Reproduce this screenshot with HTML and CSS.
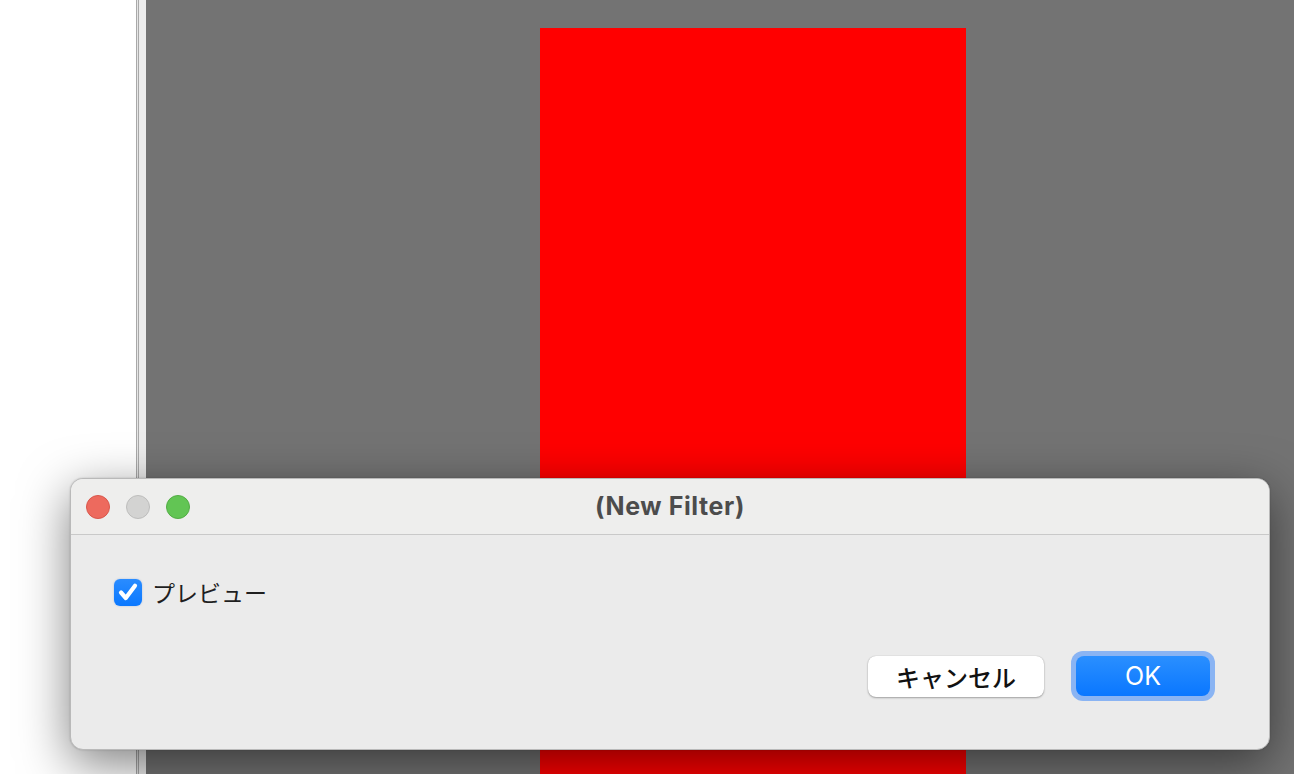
FILE: index.html
```html
<!DOCTYPE html>
<html>
<head>
<meta charset="utf-8">
<link rel="stylesheet" href="styles.css">
</head>
<body>
<div class="app">
  <div class="sidebar"></div>
  <div class="divider"><span class="line"></span><span class="gap"></span><span class="line"></span><span class="pad"></span></div>
  <div class="canvas">
    <div class="artboard"></div>
  </div>
</div>
<div class="dialog">
  <div class="titlebar">
    <div class="lights">
      <span class="light red"></span>
      <span class="light gray"></span>
      <span class="light green"></span>
    </div>
    <div class="title">(New Filter)</div>
  </div>
  <div class="body">
    <label class="check">
      <span class="box"><svg viewBox="0 0 28 28" width="28" height="28"><path d="M7 14.5 L11.8 20 L21 7.8" fill="none" stroke="#fff" stroke-width="4.2" stroke-linecap="round" stroke-linejoin="round"/></svg></span>
      <span class="check-label">プレビュー</span>
    </label>
    <div class="buttons">
      <button class="btn cancel">キャンセル</button>
      <span class="ring"><button class="btn ok">OK</button></span>
    </div>
  </div>
</div>
</body>
</html>
```
FILE: styles.css
```css
html, body {
  margin: 0;
  padding: 0;
  width: 1294px;
  height: 774px;
  overflow: hidden;
}
body {
  position: relative;
  font-family: "Inter", "Liberation Sans", "Noto Sans CJK JP", sans-serif;
}
.app {
  display: flex;
  height: 774px;
}
.sidebar {
  width: 136px;
  background: #ffffff;
}
.divider {
  display: flex;
  width: 10px;
}
.divider .line {
  width: 1px;
  background: #a9a9a9;
}
.divider .gap {
  width: 1px;
  background: #e6e6e6;
}
.divider .pad {
  width: 7px;
  background: #ececec;
}
.canvas {
  flex: 1;
  background: #737373;
  padding-top: 28px;
  padding-left: 394px;
}
.artboard {
  width: 426px;
  height: 760px;
  background: #ff0000;
}
.dialog {
  position: absolute;
  left: 70px;
  top: 478px;
  width: 1200px;
  height: 272px;
  box-sizing: border-box;
  border-radius: 13px;
  background: #ebebeb;
  border: 1px solid #b9b9b9;
  box-shadow: 0 14px 50px rgba(0, 0, 0, 0.5), 0 0 2px rgba(0, 0, 0, 0.2);
  overflow: hidden;
}
.titlebar {
  height: 56px;
  box-sizing: border-box;
  background: #eeeeed;
  border-bottom: 1px solid #c9c9c9;
  display: flex;
  align-items: center;
  position: relative;
}
.lights {
  display: flex;
  gap: 16px;
  padding-left: 15px;
}
.light {
  width: 24px;
  height: 24px;
  border-radius: 50%;
  box-sizing: border-box;
}
.light.red {
  background: #ed6a5e;
  border: 1px solid #d8574c;
}
.light.gray {
  background: #d3d3d2;
  border: 1px solid #bdbdbc;
}
.light.green {
  background: #62c554;
  border: 1px solid #53ac45;
}
.title {
  position: absolute;
  left: 0;
  right: 0;
  top: 0;
  bottom: 0;
  display: flex;
  align-items: center;
  justify-content: center;
  font-size: 25px;
  letter-spacing: 0.6px;
  font-weight: 700;
  color: #4c4c4c;
  padding-bottom: 1px;
}
.body {
  padding: 40px 0 0 43px;
}
.check {
  display: flex;
  align-items: center;
  gap: 10px;
}
.box {
  width: 28px;
  height: 27px;
  border-radius: 6px;
  background: linear-gradient(#2a8cff, #0a78ff);
  display: flex;
  align-items: center;
  justify-content: center;
  box-shadow: 0 0 2px rgba(0, 80, 200, 0.3);
}
.box svg {
  display: block;
}
.check-label {
  font-family: "Noto Sans CJK JP", sans-serif;
  font-size: 23px;
  color: #1f1f1f;
}
.buttons {
  display: flex;
  justify-content: flex-end;
  align-items: center;
  gap: 27px;
  margin-top: 42px;
  padding-right: 54px;
}
.btn {
  border: none;
  margin: 0;
  padding: 0;
  font-family: "Noto Sans CJK JP", "Inter", sans-serif;
  font-size: 24px;
  border-radius: 8px;
  display: flex;
  align-items: center;
  justify-content: center;
}
.cancel {
  width: 176px;
  height: 41px;
  background: #ffffff;
  color: #111111;
  font-weight: 500;
  box-shadow: 0 1px 2px rgba(0, 0, 0, 0.3), 0 0 1px rgba(0, 0, 0, 0.25);
}
.ring {
  display: flex;
  padding: 5px;
  border-radius: 12px;
  background: #8ab4f3;
}
.ok {
  width: 134px;
  height: 40px;
  background: linear-gradient(#2a8fff, #0a77ff);
  color: #ffffff;
  font-family: "Inter", "Liberation Sans", sans-serif;
  font-size: 25px;
}
```
